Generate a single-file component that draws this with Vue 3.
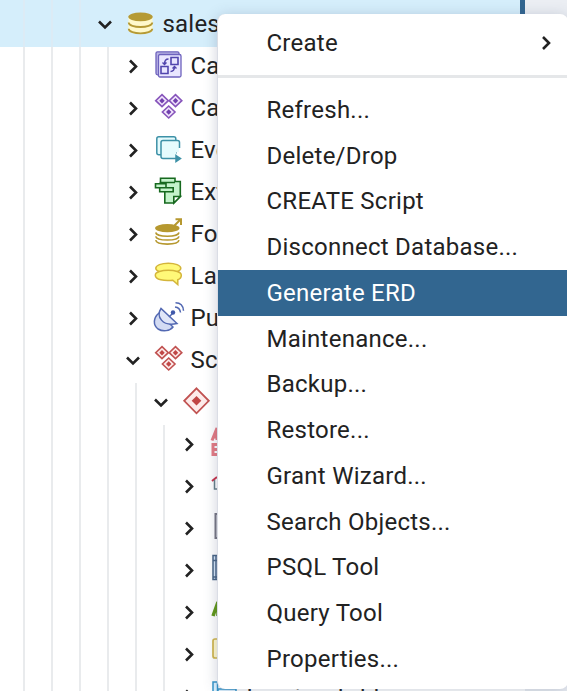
<script setup>
const rows = [
  { level: 3, open: true, icon: 'db', label: 'sales', selected: true },
  { level: 4, icon: 'cast', label: 'Ca' },
  { level: 4, icon: 'catalog', label: 'Ca' },
  { level: 4, icon: 'event', label: 'Eve' },
  { level: 4, icon: 'ext', label: 'Ext' },
  { level: 4, icon: 'fdw', label: 'Fo' },
  { level: 4, icon: 'lang', label: 'La' },
  { level: 4, icon: 'pub', label: 'Pu' },
  { level: 4, open: true, icon: 'schemas', label: 'Sc' },
  { level: 5, open: true, icon: 'schema', label: '' },
  { level: 6, icon: 'coll', label: '' },
  { level: 6, icon: 'domain', label: '' },
  { level: 6, icon: 'conf', label: '' },
  { level: 6, icon: 'dict', label: '' },
  { level: 6, icon: 'parser', label: '' },
  { level: 6, icon: 'template', label: '' },
  { level: 6, icon: 'table', label: 'Foreign Tables' },
]
const items = ['Refresh...', 'Delete/Drop', 'CREATE Script', 'Disconnect Database...', 'Generate ERD', 'Maintenance...', 'Backup...', 'Restore...', 'Grant Wizard...', 'Search Objects...', 'PSQL Tool', 'Query Tool', 'Properties...']
const diamonds = [[8, 6.7], [21.5, 6.7], [14.7, 18]]
</script>

<template>
  <div class="app">
    <div class="tree">
      <div v-for="(r, i) in rows" :key="i" class="row" :class="{ selected: r.selected }">
        <span v-for="g in r.level" :key="g" class="guide"></span>
        <span class="toggle">
          <svg v-if="r.open" width="16" height="16" viewBox="0 0 16 16"><path class="chev" d="M2 5.500l6 6 6-6" /></svg>
          <svg v-else width="16" height="16" viewBox="0 0 16 16"><path class="chev" d="M5 2.500l6 6-6 6" /></svg>
        </span>
        <svg class="icon" width="28" height="28" viewBox="0 0 28 28" fill="none">
          <g v-if="r.icon === 'db'">
            <path d="M2.500 7v13c0 5.500 24 5.500 24 0V7z" fill="#fff9cc" />
            <ellipse cx="14.500" cy="6.800" rx="12.200" ry="4.400" fill="#b59a35" />
            <path d="M2.700 12.500c0 6 23.600 6 23.600 0M2.700 18.800c0 6 23.600 6 23.600 0" stroke="#b59a35" stroke-width="1.800" />
          </g>
          <g v-else-if="r.icon === 'cast'" stroke="#6d62bd" stroke-width="1.300" transform="translate(0 -1)">
            <rect x="2" y="0.800" width="23" height="23" rx="1.500" fill="#b9b4e4" />
            <rect x="4.500" y="3.500" width="22.500" height="22.500" rx="1.500" fill="#e9e6ff" />
            <path d="M17 6.500h7v7h-7zM7 15.500h7v7H7z" stroke="#5145ad" stroke-width="1.600" />
            <path d="M14.500 8c-3 0-4 1.500-4 5M8.500 11.500l2 2 2-2M16.500 20.500c3 0 4-1.500 4-5M18.500 17.500l2-2 2 2" stroke="#5145ad" stroke-width="1.400" />
          </g>
          <g v-else-if="r.icon === 'catalog' || r.icon === 'schemas'" :class="r.icon">
            <g v-for="(d, k) in diamonds" :key="k" :transform="`translate(${d[0]} ${d[1]})`">
              <path class="gem" d="M0-6L6.300 0 0 6-6.300 0z" /><path class="core" d="M0-2.700L2.700 0 0 2.700-2.700 0z" />
            </g>
          </g>
          <g v-else-if="r.icon === 'event'" stroke="#3d91a7" stroke-width="1.500" transform="translate(0 -1)">
            <rect x="2.800" y="1.800" width="19" height="18" rx="2" fill="#e5fbfd" />
            <path d="M25 15V7.500q0-2-2-2H9q-2 0-2 2v14q0 2 2 2H22V17h3z" fill="#e5fbfd" stroke="none" />
            <path d="M25.500 13V7.500q0-2-2-2H9q-2 0-2 2v14q0 2 2 2H23" />
            <path d="M22 20.500l4.500 3-4.500 3z" fill="#3d91a7" />
          </g>
          <g v-else-if="r.icon === 'ext'" stroke="#17691f" stroke-width="1.600" fill="#c4f3cb">
            <path d="M6.500 0.300h14.500v3.200h5.300v15l-6.500 6.500h-9V9.500H6.500z" />
            <path d="M6.500 5.500V4.500H21M5.700 9.800h13.500v4H5.700zM1.500 5.800h10.500v4H1.500z" />
            <path d="M19.800 25v-6.500h6.500z" fill="#fff" />
          </g>
          <g v-else-if="r.icon === 'fdw'" stroke="#b6982f" stroke-width="1.600">
            <ellipse cx="13.300" cy="8.200" rx="12.200" ry="4.100" fill="#b6982f" stroke="none" />
            <path d="M1.700 12.500c1 5 22.300 5 23.300 0M1.700 16.300c1 5 22.300 5 23.300 0M1.700 20.200c1 5.200 22.300 5.200 23.300 0" />
            <path d="M20.500 5.500l6-6M21.500 -.7H27V5" stroke-width="2" />
          </g>
          <g v-else-if="r.icon === 'lang'" fill="#fff978" stroke="#d4b53a" stroke-width="1.500" transform="translate(.3 -.8)">
            <ellipse cx="14" cy="7" rx="12.500" ry="5" />
            <path d="M1 14c0-6.500 26-6.500 26 0 0 3-1.500 3.800-3.500 4.500v4.800l-5-4.300C10 20 1 18.500 1 14z" />
          </g>
          <g v-else-if="r.icon === 'pub'" stroke="#5268b2" stroke-width="1.500">
            <path d="M5 9C-1 14-1 21 4 25c5 3 12 2 15-2z" fill="#d3dbf3" />
            <path d="M7 4.500C2 12 8 23 23 19.500z" fill="#e0e6f8" />
            <path d="M15 13l4-4M21 3q5 .5 5.500 5.500M21.500-1.300q7.500 0 8 8" />
            <circle cx="19" cy="8.500" r="2.200" fill="#4059aa" stroke="none" />
          </g>
          <g v-else-if="r.icon === 'schema'" class="schemas" transform="translate(0 -1.700)">
            <path class="gem big" d="M14.500 2L26.800 14.500 14.500 27 2.200 14.500z" /><path class="core" d="M14.500 9.800l4.800 4.700-4.800 4.700-4.800-4.700z" />
          </g>
          <g v-else-if="r.icon === 'coll'" stroke="#e57b83" stroke-width="3"><path d="M2 10.500L7-2v12M4 7h5M3 13v13M3 14.500h6M3 19.500h6M3 24.500h6" /></g>
          <g v-else-if="r.icon === 'domain'"><path d="M2 9l5-4" stroke="#c83249" stroke-width="2" /><path d="M4.500 8v9h4V7" stroke="#678089" stroke-width="1.500" /></g>
          <g v-else-if="r.icon === 'conf'"><rect x="5.500" y="0" width="20" height="24" fill="#eee" stroke="#777783" stroke-width="2" /></g>
          <g v-else-if="r.icon === 'dict'" stroke="#496585" stroke-width="1.500"><rect x="3" y="-.5" width="23" height="24" fill="#d5e6f8" /><path d="M6 0v24M3 4.500h23M3 21h23" /></g>
          <g v-else-if="r.icon === 'parser'"><path d="M3 18L8 4v14" stroke="#609817" stroke-width="3.500" /></g>
          <g v-else-if="r.icon === 'template'"><rect x="3" y="-1" width="20" height="19" rx="2" fill="#fff9cf" stroke="#d1b64b" stroke-width="1.700" /></g>
          <g v-else-if="r.icon === 'table'" stroke="#3695c9" stroke-width="1.500" fill="#dcf2ff"><rect x="3" y="0" width="4.500" height="20" /><path d="M8 7h18v18H8z" /></g>
        </svg>
        <span class="label">{{ r.label }}</span>
      </div>
    </div>
    <div class="splitter"></div>
    <div class="panel"></div>
    <div class="menu">
      <div class="item create">Create
        <svg width="16" height="16" viewBox="0 0 16 16"><path class="chev" d="M5 2l6 6-6 6" /></svg>
      </div>
      <div class="divider"></div>
      <div v-for="t in items" :key="t" class="item" :class="{ active: t === 'Generate ERD' }">{{ t }}</div>
    </div>
  </div>
</template>

<style>
body { overflow: hidden; }
</style>

<style scoped>
.app { position: relative; display: flex; width: 567px; height: 691px; overflow: hidden; background: #fff; font-family: Roboto, sans-serif; color: #222; letter-spacing: .2px; }
.tree { width: 520px; flex: none; }
.row { display: flex; align-items: center; height: 42px; padding: 0 0 4px 10px; box-sizing: border-box; white-space: nowrap; }
.row.selected { height: 47px; padding-bottom: 0; background: #d5eefb; }
.guide { flex: none; width: 28px; height: 42px; margin-bottom: -4px; background: linear-gradient(#e9ebed, #e9ebed) center / 2px 100% no-repeat; }
.selected .guide { height: 47px; margin-bottom: 0; background-image: linear-gradient(#dcebf5, #dcebf5); }
.toggle { display: flex; flex: none; justify-content: center; width: 28px; padding-right: 6px; box-sizing: border-box; }
.chev { fill: none; stroke: #222; stroke-width: 2.6; }
.icon { flex: none; margin-left: 4px; overflow: visible; }
.label { margin-left: 8.5px; font-size: 24px; line-height: 38px; }
.gem { stroke-width: 1.6; }
.big { stroke-width: 1.8; }
.catalog .gem { fill: #f0e3fb; stroke: #8755bb; }
.catalog .core { fill: #7140ae; }
.schemas .gem { fill: #fdebea; stroke: #c15251; }
.schemas .core { fill: #c04645; }
.splitter { align-self: flex-start; width: 5px; height: 689px; background: #326690; }
.panel { flex: 1; background: #ebeef3; }
.menu { position: absolute; left: 217px; top: 14px; width: 351px; height: 675px; box-sizing: border-box; border-left: 1px solid #dadde5; border-radius: 8px; background: #fff; box-shadow: 0 2px 14px rgba(60, 75, 110, .25); overflow: hidden; }
.item { display: flex; align-items: center; height: 45.75px; padding-left: 48.5px; font-size: 24px; white-space: nowrap; letter-spacing: .25px; }
.create { height: 57px; padding-right: 14px; justify-content: space-between; }
.divider { height: 3px; margin: 4px 0 9px; background: #e5e7e9; }
.active { background: #326690; color: #fff; }
</style>
